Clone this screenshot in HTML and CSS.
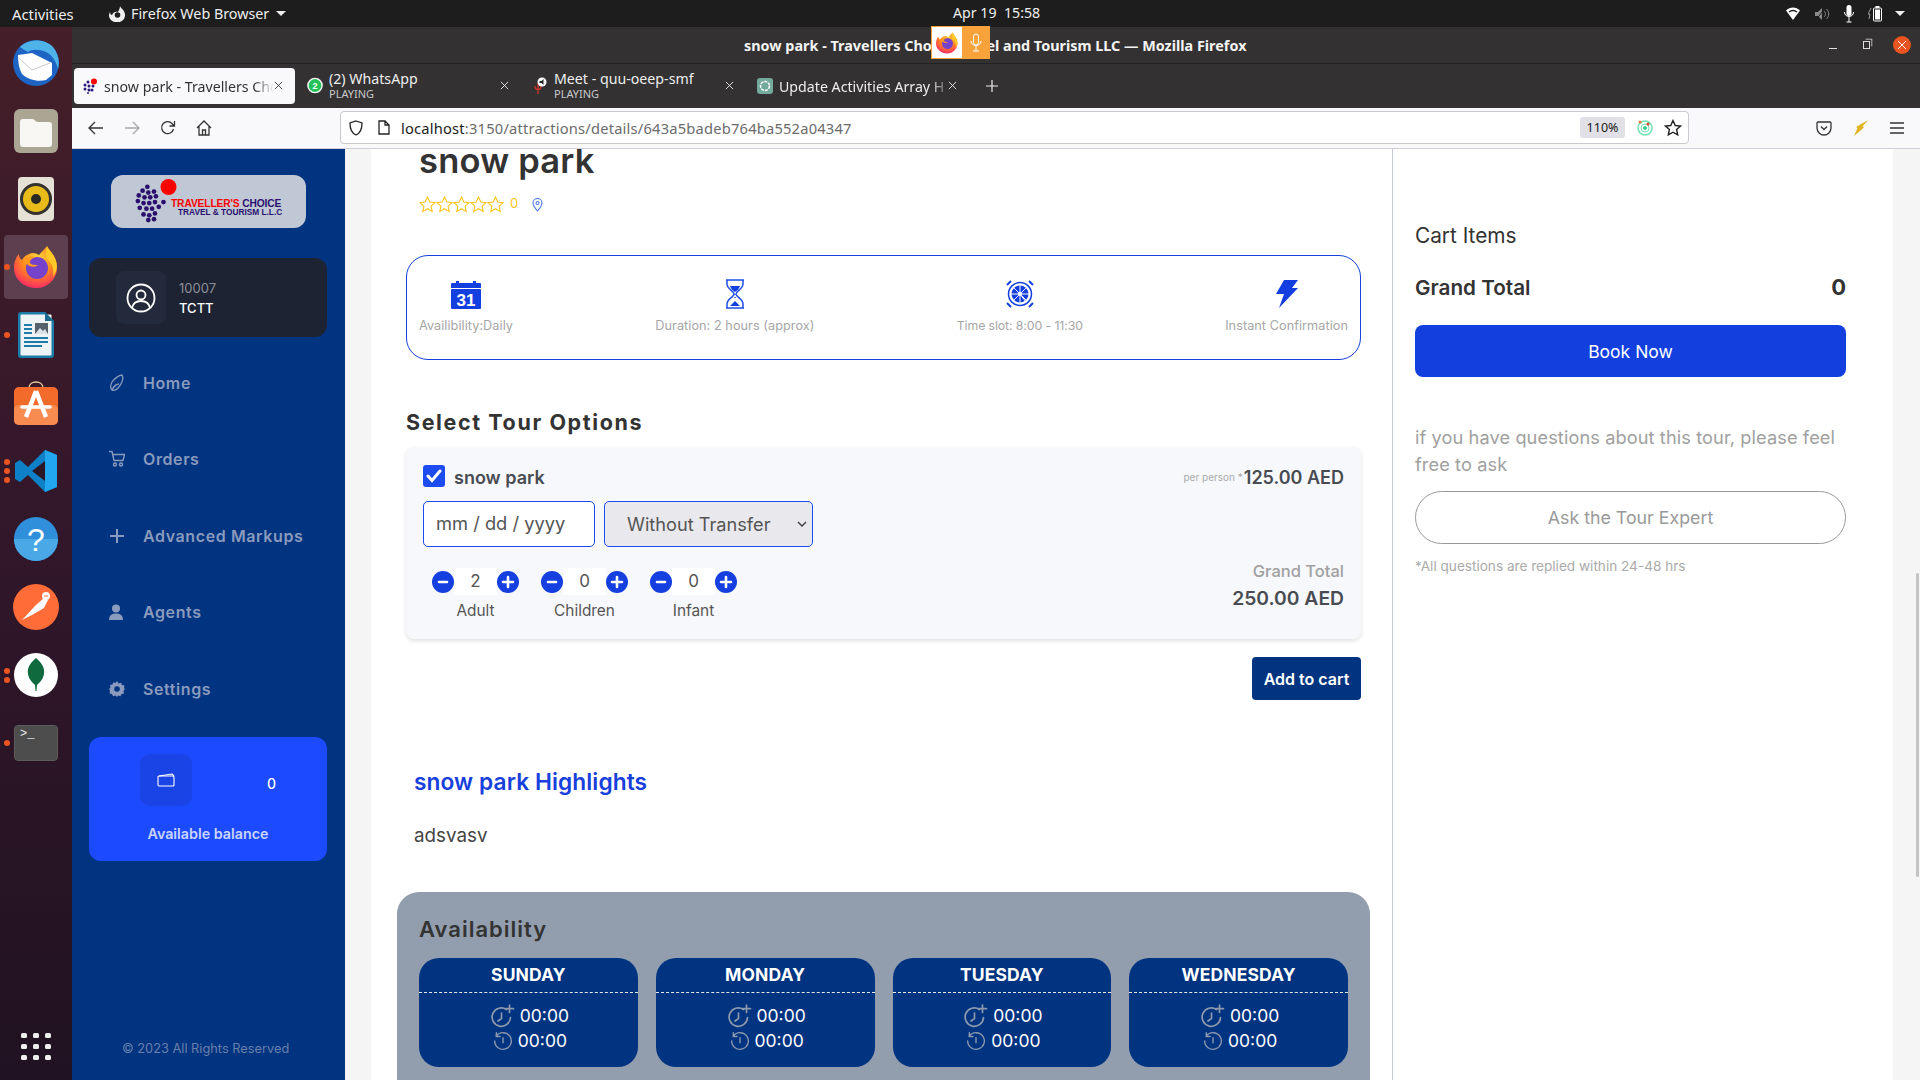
FILE: index.html
```html
<!DOCTYPE html>
<html lang="en">
<head>
<meta charset="utf-8">
<title>snow park - Travellers Choice Travel and Tourism LLC</title>
<link rel="stylesheet" href="styles.css">
</head>
<body>
<svg class="defs" width="0" height="0">
  <defs>
    <radialGradient id="ffg" cx="55%" cy="30%" r="80%"><stop offset="0" stop-color="#ffdc3c"/><stop offset=".45" stop-color="#ff8a1e"/><stop offset=".8" stop-color="#ff3d56"/><stop offset="1" stop-color="#e0207f"/></radialGradient>
    <symbol id="ff" viewBox="0 0 44 44">
      <path d="M33 1c2 5 9 9 10 20 1 12-9 22-21 22S0 34 0 23C0 17 2 12 5 9c0 3 1 5 3 6 2-4 6-6 10-7 4 0 5 1 7 2 2-3 5-5 8-9z" fill="url(#ffg)"/>
      <path d="M33 1c2 5 9 9 10 20 0 4-2 8-4 11 1-6 0-13-5-17-2-2-3-6-1-14z" fill="#ffc928"/>
      <circle cx="23" cy="23" r="11" fill="#7542c9"/>
      <path d="M8 15c4-4 10-4 14-3-4 1-6 3-6 5 0 3 5 3 8 3-3 3-9 2-11-1-2-2-4-3-5-4z" fill="#ff9a1f"/>
    </symbol>
    <symbol id="clockplus" viewBox="0 0 24 24" fill="none" stroke="#8e99ad" stroke-width="1.700" stroke-linecap="round">
      <path d="M15.500 5.500A9.200 9.200 0 1 0 19.500 13.500"/><path d="M10.500 9v5.500l-3.500 2.500"/><path d="M18.500 1v7.500M15 4.700h7.500"/>
    </symbol>
    <symbol id="clockback" viewBox="0 0 24 24" fill="none" stroke="#8e99ad" stroke-width="1.700" stroke-linecap="round">
      <path d="M4 6a10 10 0 1 1-2 6"/><path d="M4 2v4.500h4.500"/><path d="M12 8v6"/>
    </symbol>
    <symbol id="xmark" viewBox="0 0 10 10" fill="none" stroke="currentColor" stroke-width="1">
      <path d="M1 1l8 8M9 1l-8 8"/>
    </symbol>
    <symbol id="plusmark" viewBox="0 0 22 22"><circle cx="11" cy="11" r="11" fill="#163fe0"/><path d="M11 6v10M6 11h10" stroke="#fff" stroke-width="2.600" stroke-linecap="round"/></symbol>
    <symbol id="minusmark" viewBox="0 0 22 22"><circle cx="11" cy="11" r="11" fill="#163fe0"/><path d="M7 11h8" stroke="#fff" stroke-width="2.600" stroke-linecap="round"/></symbol>
  </defs>
</svg>

<header class="topbar">
  <div class="top-left">
    <span class="activities">Activities</span>
    <span class="app-menu">
      <svg width="16" height="16" viewBox="0 0 16 16"><path d="M11 0c1 3 5 4 5 9a8 7 0 1 1-15-3c0 2 1 3 2 3 1-3 4-4 6-3 1-2 2-4 2-6z" fill="#eee"/><circle cx="8.500" cy="9" r="2.800" fill="#1d1d1d"/></svg>
      Firefox Web Browser
      <i class="caret"></i>
    </span>
  </div>
  <div class="clock">Apr 19&nbsp;&nbsp;15:58</div>
  <div class="tray">
    <svg width="16" height="14" viewBox="0 0 16 14"><path d="M1 3.500C5-.5 11-.5 15 3.500L8 13z" fill="#fff"/><path d="M4 5c2.500-1.800 5.500-1.800 8 0" stroke="#1d1d1d" stroke-width="1.500" fill="none"/></svg>
    <svg width="16" height="14" viewBox="0 0 16 14"><path d="M1 5h3l4-4v12l-4-4H1z" fill="#8a8a8a"/><path d="M10 4c2 2 2 4 0 6M12.500 2c3 3 3 7 0 10" stroke="#8a8a8a" fill="none"/><path d="M2 13L11 1" stroke="#1d1d1d"/></svg>
    <svg width="12" height="18" viewBox="0 0 12 18"><rect x="3.500" y="0" width="5" height="11" rx="2.500" fill="#fff"/><path d="M1.500 7c0 6 9 6 9 0M6 12v5M3.500 17h5" stroke="#fff" fill="none"/></svg>
    <svg width="14" height="16" viewBox="0 0 14 16"><path d="M3 2L0 8h2l-1 5" stroke="#999" fill="none"/><rect x="5.500" y="2" width="8" height="13" rx="1" fill="none" stroke="#fff"/><rect x="7" y="3.500" width="5" height="10" fill="#fff"/><rect x="7.500" y="0" width="4" height="2" fill="#fff"/></svg>
    <i class="caret caret-wide"></i>
  </div>
</header>

<div class="desk">
  <nav class="dock">
    <div class="dock-item">
      <svg width="48" height="48" viewBox="0 0 48 48"><circle cx="24" cy="24" r="23" fill="#1d64c4"/><path d="M8 8c8-8 24-9 33 0 5 6 7 14 5 22-2-8-6-14-12-17-7-3-14-3-18 0-3-2-6-3-8-5z" fill="#4fb3ea"/><path d="M6 16l14-2 20 10v12l-6 5c-8 2-18 0-24-6-3-5-4-12-4-19z" fill="#fff"/><path d="M7 19l13 12 18-7" fill="none" stroke="#c9c9c9"/></svg>
    </div>
    <div class="dock-item">
      <svg width="44" height="44" viewBox="0 0 44 44"><rect width="44" height="44" rx="6" fill="#aba594"/><path d="M6 13a3 3 0 0 1 3-3h10l4 3h12a3 3 0 0 1 3 3v19a3 3 0 0 1-3 3H9a3 3 0 0 1-3-3z" fill="#f8f7f4"/></svg>
    </div>
    <div class="dock-item">
      <svg width="36" height="44" viewBox="0 0 36 44"><rect width="36" height="44" rx="4" fill="#e5e1d6"/><circle cx="18" cy="22" r="16" fill="#33322f"/><circle cx="18" cy="22" r="13" fill="#e8bb1a"/><circle cx="18" cy="22" r="5" fill="#2a2822"/></svg>
    </div>
    <div class="dock-item dock-active">
      <i class="run-dot"></i>
      <svg width="44" height="44"><use href="#ff"/></svg>
    </div>
    <div class="dock-item">
      <i class="run-dot"></i>
      <svg width="36" height="46" viewBox="0 0 36 46"><path d="M0 3a3 3 0 0 1 3-3h24l9 9v34a3 3 0 0 1-3 3H3a3 3 0 0 1-3-3z" fill="#1c7ba8"/><rect x="2.500" y="2.500" width="31" height="41" rx="1" fill="#eef3f6"/><path d="M27 0l9 9h-9z" fill="#1a6a90"/><path d="M6 13h8M6 17h8M6 21h8M6 26h24M6 30h24M6 34h18" stroke="#1c7ba8" stroke-width="2"/><rect x="17" y="11" width="13" height="11" fill="#55606a"/><path d="M17 22l5-6 3 3 2-2 3 5z" fill="#dbe3e8"/></svg>
    </div>
    <div class="dock-item">
      <svg width="44" height="44" viewBox="0 0 44 44"><path d="M15 7c0-8 14-8 14 0" fill="none" stroke="#ecc8a0" stroke-width="1.500"/><rect y="6" width="44" height="38" rx="5" fill="#f26b2b"/><rect y="24" width="44" height="20" rx="5" fill="#f78b50"/><path d="M22 10L12 36M22 10l10 26" stroke="#fff" stroke-width="4.500" fill="none"/><path d="M8 26h28" stroke="#fff" stroke-width="3.500" stroke-linecap="round"/></svg>
    </div>
    <div class="dock-item">
      <i class="run-dot"></i><i class="run-dot run-dot-b"></i><i class="run-dot run-dot-c"></i>
      <svg width="42" height="42" viewBox="0 0 42 42"><path d="M30 0l12 5v32l-12 5L13 25 5 32 0 29V13l5-3 8 7z" fill="#0d80c8"/><path d="M30 0l12 5v32l-12 5z" fill="#22a6f0"/><path d="M30 11v20L17 21z" fill="#2b1626"/></svg>
    </div>
    <div class="dock-item">
      <svg width="44" height="44" viewBox="0 0 44 44"><circle cx="22" cy="22" r="22" fill="#2f8fdb"/><path d="M0 22a22 22 0 0 0 44 0z" fill="#4aa8e6"/><text x="22" y="34" text-anchor="middle" class="help-q">?</text></svg>
    </div>
    <div class="dock-item">
      <svg width="46" height="46" viewBox="0 0 46 46"><circle cx="23" cy="23" r="23" fill="#ff6c37"/><path d="M9 36l14-15 8-7 4 2-4 8-12 7z" fill="#fff"/><circle cx="33" cy="12" r="4" fill="#fff"/><path d="M31 12l4 0" stroke="#ff6c37"/></svg>
    </div>
    <div class="dock-item">
      <i class="run-dot run-dot-d"></i><i class="run-dot run-dot-e"></i>
      <svg width="44" height="44" viewBox="0 0 44 44"><circle cx="22" cy="22" r="22" fill="#fff"/><path d="M22 5c6 5 9 10 8 16-1 6-5 9-7 11l-.500 6h-1l-.500-6c-2-2-6-5-7-11-1-6 2-11 8-16z" fill="#0f6b3e"/></svg>
    </div>
    <div class="dock-item">
      <i class="run-dot"></i>
      <div class="term-icon">&gt;_</div>
    </div>
    <div class="dock-grid">
      <i></i><i></i><i></i><i></i><i></i><i></i><i></i><i></i><i></i>
    </div>
  </nav>

  <div class="window">
    <div class="titlebar">
      <div class="win-title">snow park - Travellers Choice Travel and Tourism LLC — Mozilla Firefox</div>
      <div class="sharing">
        <span class="share-ff"><svg width="22" height="22"><use href="#ff"/></svg></span>
        <span class="share-mic"><svg width="12" height="20" viewBox="0 0 12 20"><rect x="3.500" y="1" width="5" height="11" rx="2.500" fill="none" stroke="#fff"/><path d="M1 8c0 6 10 6 10 0M6 13v5M3 18h6" fill="none" stroke="#fff"/></svg></span>
      </div>
      <div class="win-ctl">
        <i class="win-min"></i>
        <i class="win-max"></i>
        <span class="win-close"><svg width="10" height="10"><use href="#xmark"/></svg></span>
      </div>
    </div>

    <div class="tabbar">
      <div class="tab tab-active">
        <svg class="fav" width="16" height="16" viewBox="0 0 16 16" fill="#2a1a78"><circle cx="6" cy="4" r="1.500"/><circle cx="3" cy="7" r="1.500"/><circle cx="7" cy="8" r="1.500"/><circle cx="11" cy="8" r="1.500"/><circle cx="3" cy="11" r="1.500"/><circle cx="7" cy="12" r="1.500"/><circle cx="10" cy="12" r="1.500"/><circle cx="6" cy="15" r="1"/><circle cx="12" cy="3.500" r="3" fill="#f00"/></svg>
        <span class="tab-label tab-fade">snow park - Travellers Cho</span>
        <svg class="tab-x" width="9" height="9"><use href="#xmark"/></svg>
      </div>
      <div class="tab tab-wa">
        <svg class="fav" width="16" height="18" viewBox="0 0 16 18"><circle cx="8" cy="8.500" r="7.800" fill="#fff"/><circle cx="8" cy="8.500" r="6.400" fill="#25c25a"/><text x="8" y="12" text-anchor="middle" class="fav-num">2</text></svg>
        <div class="tab-two"><span>(2) WhatsApp</span><small>PLAYING</small></div>
        <svg class="tab-x" width="9" height="9"><use href="#xmark"/></svg>
      </div>
      <div class="tab tab-meet">
        <svg class="fav" width="16" height="18" viewBox="0 0 16 18"><path d="M6 6v6M3 9c0 5 6 5 6 0M6 14v3" stroke="#c9352b" fill="none" stroke-width="1.400"/><circle cx="10" cy="5" r="4.500" fill="#fff"/><path d="M7.500 4h2l2-2v6l-2-2h-2z" fill="#222"/></svg>
        <div class="tab-two"><span>Meet - quu-oeep-smf</span><small>PLAYING</small></div>
        <svg class="tab-x" width="9" height="9"><use href="#xmark"/></svg>
      </div>
      <div class="tab tab-gpt">
        <svg class="fav" width="16" height="16" viewBox="0 0 16 16"><rect width="16" height="16" rx="3" fill="#74aa9c"/><circle cx="8" cy="8" r="4.500" fill="none" stroke="#fff" stroke-width="1.500" stroke-dasharray="3 1"/></svg>
        <span class="tab-label tab-fade">Update Activities Array H</span>
        <svg class="tab-x" width="9" height="9"><use href="#xmark"/></svg>
      </div>
      <svg class="tab-new" width="12" height="12" viewBox="0 0 12 12"><path d="M6 0v12M0 6h12" stroke="#eee" stroke-width="1.200"/></svg>
    </div>

    <div class="navbar">
      <div class="nav-btns">
        <svg width="16" height="14" viewBox="0 0 16 14" fill="none" stroke="#333" stroke-width="1.300"><path d="M15 7H1M7 1L1 7l6 6"/></svg>
        <svg width="16" height="14" viewBox="0 0 16 14" fill="none" stroke="#a8a8a8" stroke-width="1.300"><path d="M1 7h14M9 1l6 6-6 6"/></svg>
        <svg width="16" height="16" viewBox="0 0 16 16" fill="none" stroke="#333" stroke-width="1.300"><path d="M13.500 9A6 6 0 1 1 12 3.500L14 6M14.500 1v5h-5"/></svg>
        <svg width="16" height="16" viewBox="0 0 16 16" fill="none" stroke="#333" stroke-width="1.300"><path d="M1 8l7-7 7 7M3 6.500V15h10V6.500M6.500 15v-5h3v5"/></svg>
      </div>
      <div class="urlbar">
        <svg width="14" height="16" viewBox="0 0 14 16" fill="none" stroke="#222" stroke-width="1.300"><path d="M7 1l6 2c0 6-1 10-6 12C2 13 1 9 1 3z"/></svg>
        <svg width="12" height="15" viewBox="0 0 12 15" fill="none" stroke="#222" stroke-width="1.300"><path d="M1 1h6l4 4v9H1zM7 1v4h4"/></svg>
        <span class="url-text"><b>localhost</b>:3150/attractions/details/643a5badeb764ba552a04347</span>
        <span class="zoom-badge">110%</span>
        <svg width="16" height="18" viewBox="0 0 16 18"><circle cx="8" cy="9" r="7" fill="none" stroke="#6fe0b0" stroke-width="1.500"/><circle cx="8" cy="9" r="4" fill="none" stroke="#6fe0b0"/><circle cx="8" cy="9" r="2" fill="#3ecb8b"/><circle cx="3" cy="3" r="1.500" fill="#e8764a"/><circle cx="11" cy="5" r="1.500" fill="#e0402a"/></svg>
        <svg width="18" height="18" viewBox="0 0 18 18" fill="none" stroke="#222" stroke-width="1.400"><path d="M9 1.500l2.300 5 5.200.600-3.900 3.500 1.100 5.300L9 13.200l-4.700 2.700 1.100-5.300L1.500 7.100l5.200-.600z"/></svg>
      </div>
      <div class="nav-end">
        <svg width="16" height="16" viewBox="0 0 16 16" fill="none" stroke="#333" stroke-width="1.300"><path d="M2 2h12a1 1 0 0 1 1 1v5a7 7 0 0 1-14 0V3a1 1 0 0 1 1-1z"/><path d="M5 6.500l3 3 3-3"/></svg>
        <svg width="14" height="16" viewBox="0 0 14 16"><path d="M14 0L8.500 6.500l1.500 1L0 16 3.500 8 2 7z" fill="#e0b420"/></svg>
        <svg width="14" height="12" viewBox="0 0 14 12" stroke="#333" stroke-width="1.300"><path d="M0 1h14M0 6h14M0 11h14"/></svg>
      </div>
    </div>

    <div class="page">
      <aside class="sidebar">
        <div class="logo">
          <svg class="logo-dots" width="44" height="46" viewBox="0 0 44 46">
            <g fill="#2a0f6e" transform="translate(0 5) scale(.95)">
              <circle cx="13" cy="3" r="2.500"/><circle cx="8" cy="7" r="2.500"/><circle cx="14" cy="9" r="2.500"/><circle cx="20" cy="8" r="2.500"/><circle cx="4" cy="12" r="2.500"/><circle cx="10" cy="14" r="2.500"/><circle cx="16" cy="14" r="2.500"/><circle cx="22" cy="13" r="2.500"/><circle cx="3" cy="18" r="2.500"/><circle cx="9" cy="20" r="2.500"/><circle cx="15" cy="20" r="2.500"/><circle cx="21" cy="19" r="2.500"/><circle cx="30" cy="19" r="2.500"/><circle cx="5" cy="25" r="2.500"/><circle cx="12" cy="26" r="2.500"/><circle cx="18" cy="26" r="2.500"/><circle cx="25" cy="24" r="2.500"/><circle cx="9" cy="32" r="2.500"/><circle cx="15" cy="33" r="2.500"/><circle cx="21" cy="31" r="2.500"/><circle cx="14" cy="38" r="2.500"/><circle cx="20" cy="37" r="2.500"/>
            </g>
            <circle cx="33.500" cy="8" r="8" fill="#f00"/>
          </svg>
          <div class="logo-text">
            <div class="logo-l1"><span>TRAVELLER'S</span> CHOICE</div>
            <div class="logo-l2">TRAVEL &amp; TOURISM L.L.C</div>
          </div>
        </div>

        <div class="user-card">
          <div class="avatar">
            <svg width="30" height="30" viewBox="0 0 30 30" fill="none" stroke="#fff" stroke-width="1.800"><circle cx="15" cy="15" r="13.500"/><circle cx="15" cy="12" r="4.500"/><path d="M6 25c1-5 5-7 9-7s8 2 9 7"/></svg>
          </div>
          <div class="user-info">
            <div class="user-id">10007</div>
            <div class="user-name">TCTT</div>
          </div>
        </div>

        <ul class="menu">
          <li class="menu-item">
            <svg width="16" height="18" viewBox="0 0 16 18" fill="none" stroke="#8a9bbd" stroke-width="1.300"><path d="M13 1c2 3 0 9-4 13-2 2-5 3-6 2s-2-4 0-8c2-3 7-7 10-7z"/><path d="M3 16c2-4 5-6 7-6"/></svg>
            <span>Home</span>
          </li>
          <li class="menu-item">
            <svg width="16" height="17" viewBox="0 0 16 17" fill="none" stroke="#8a9bbd" stroke-width="1.400"><path d="M0 1h3l2 9h9l1.500-6H4"/><circle cx="6" cy="14" r="1.500"/><circle cx="12" cy="14" r="1.500"/></svg>
            <span>Orders</span>
          </li>
          <li class="menu-item">
            <svg width="16" height="16" viewBox="0 0 16 16" stroke="#8a9bbd" stroke-width="2"><path d="M8 1v14M1 8h14"/></svg>
            <span>Advanced Markups</span>
          </li>
          <li class="menu-item">
            <svg width="14" height="16" viewBox="0 0 14 16" fill="#8a9bbd"><circle cx="7" cy="4.500" r="4"/><path d="M0 16c0-5 3-6.500 7-6.500s7 1.500 7 6.500z"/></svg>
            <span>Agents</span>
          </li>
          <li class="menu-item">
            <svg width="16" height="16" viewBox="0 0 16 16"><path d="M8 0l1.500 2.500 2.500-.800 1 2.300 2.500.500-.500 2.800L16 8l-1.500 1.700.500 2.800-2.500.500-1 2.300-2.500-.800L8 16l-1.500-1.500-2.500.800-1-2.300-2.500-.500.500-2.800L0 8l1.500-1.200L1 4l2.500-.500 1-2.300 2 .800z" fill="#8a9bbd"/><circle cx="8" cy="8" r="2.800" fill="#003380"/></svg>
            <span>Settings</span>
          </li>
        </ul>

        <div class="balance">
          <div class="balance-top">
            <div class="wallet">
              <svg width="18" height="14" viewBox="0 0 18 14" fill="none" stroke="#fff" stroke-width="1.100"><rect x="1" y="3" width="16" height="10" rx="1"/><path d="M2 3l13-2 2 2"/></svg>
            </div>
            <span class="balance-num">0</span>
          </div>
          <div class="balance-label">Available balance</div>
        </div>

        <div class="copyright">© 2023 All Rights Reserved</div>
      </aside>

      <div class="gutter"></div>

      <main class="main">
        <h1 class="title">snow park</h1>
        <div class="rating">
          <svg class="stars" width="85" height="17" viewBox="0 0 85 17" fill="none" stroke="#fcc419" stroke-width="1.100">
            <path id="st" d="M8.500 1l2.300 5 5.200.600-3.900 3.500 1.100 5.400-4.700-2.800-4.700 2.800 1.100-5.400L1 6.600l5.200-.600z"/>
            <use href="#st" x="17"/><use href="#st" x="34"/><use href="#st" x="51"/><use href="#st" x="68"/>
          </svg>
          <span class="rating-num">0</span>
          <svg class="pin" width="11" height="14" viewBox="0 0 11 14" fill="none" stroke="#4a78e0" stroke-width="1.100"><path d="M5.500 13C2 9 1 7 1 5a4.500 4.500 0 0 1 9 0c0 2-1 4-4.500 8z"/><circle cx="5.500" cy="5" r="1.500"/></svg>
        </div>

        <section class="info-box">
          <div class="info-item">
            <svg width="30" height="30" viewBox="0 0 30 30"><path d="M0 5a1 1 0 0 1 1-1h4V2h3v2h14V2h3v2h4a1 1 0 0 1 1 1v4H0z" fill="#143fe0"/><rect y="10" width="30" height="20" rx="1" fill="#143fe0"/><text x="15" y="26.500" text-anchor="middle" class="cal-num">31</text></svg>
            <span>Availibility:Daily</span>
          </div>
          <div class="info-item">
            <svg width="20" height="30" viewBox="0 0 20 30" fill="none" stroke="#1f4fe8" stroke-width="1.500"><path d="M1 1h18M1 29h18M2 1v4c0 5 7 7 7 10s-7 5-7 10v4M18 1v4c0 5-7 7-7 10s7 5 7 10v4"/><path d="M5 7h10c-1 3-3 5-5 6-2-1-4-3-5-6zM5 27h10l-5-5z" fill="#143fe0" stroke="none"/><path d="M10 15v6" stroke-dasharray="1 2"/></svg>
            <span>Duration: 2 hours (approx)</span>
          </div>
          <div class="info-item">
            <svg width="32" height="30" viewBox="0 0 32 30"><circle cx="16" cy="15" r="11.500" fill="none" stroke="#143fe0" stroke-width="1.500"/><circle cx="16" cy="15" r="8.500" fill="#143fe0"/><path d="M16 6v18M7 15h18M16 15l6 8M10 9l12 12M22 9L10 21" stroke="#fff" stroke-width="1"/><circle cx="16" cy="15" r="2" fill="#fff"/><path d="M3 6l4-4M29 6l-4-4M3 24l4 4M29 24l-4 4" stroke="#143fe0" stroke-width="2"/></svg>
            <span class="slot-text">Time slot: 8:00 - 11:30</span>
          </div>
          <div class="info-item">
            <svg width="22" height="28" viewBox="0 0 22 28"><path d="M8 0h14l-6 8h6L3 28l5-14H0z" fill="#143fe0"/></svg>
            <span>Instant Confirmation</span>
          </div>
        </section>

        <h2 class="options-title">Select Tour Options</h2>

        <section class="option-card">
          <div class="option-head">
            <div class="check"><svg width="16" height="14" viewBox="0 0 16 14" fill="none" stroke="#fff" stroke-width="3" stroke-linecap="round"><path d="M2 7l4 4.500L14 2"/></svg></div>
            <span class="option-name">snow park</span>
            <span class="per-person">per person *</span>
            <span class="option-price">125.00 AED</span>
          </div>
          <div class="option-fields">
            <div class="date-field">mm / dd / yyyy</div>
            <div class="select-field">
              <span>Without Transfer</span>
              <svg width="10" height="6" viewBox="0 0 10 6" fill="none" stroke="#444" stroke-width="1.500"><path d="M1 1l4 4 4-4"/></svg>
            </div>
          </div>
          <div class="option-bottom">
            <div class="steppers">
              <div class="stepper">
                <div class="stepper-row"><svg width="22" height="22"><use href="#minusmark"/></svg><span class="count">2</span><svg width="22" height="22"><use href="#plusmark"/></svg></div>
                <div class="stepper-label">Adult</div>
              </div>
              <div class="stepper">
                <div class="stepper-row"><svg width="22" height="22"><use href="#minusmark"/></svg><span class="count">0</span><svg width="22" height="22"><use href="#plusmark"/></svg></div>
                <div class="stepper-label">Children</div>
              </div>
              <div class="stepper">
                <div class="stepper-row"><svg width="22" height="22"><use href="#minusmark"/></svg><span class="count">0</span><svg width="22" height="22"><use href="#plusmark"/></svg></div>
                <div class="stepper-label">Infant</div>
              </div>
            </div>
            <div class="option-total">
              <div class="total-label">Grand Total</div>
              <div class="total-value">250.00 AED</div>
            </div>
          </div>
        </section>

        <div class="cart-row"><button class="add-cart">Add to cart</button></div>

        <h2 class="highlights">snow park Highlights</h2>
        <p class="high-text">adsvasv</p>

        <section class="availability">
          <h2 class="avail-title">Availability</h2>
          <div class="days">
            <div class="day">
              <div class="day-name">SUNDAY</div>
              <div class="day-times">
                <div class="time"><svg width="24" height="24"><use href="#clockplus"/></svg>00:00</div>
                <div class="time"><svg width="20" height="20"><use href="#clockback"/></svg>00:00</div>
              </div>
            </div>
            <div class="day">
              <div class="day-name">MONDAY</div>
              <div class="day-times">
                <div class="time"><svg width="24" height="24"><use href="#clockplus"/></svg>00:00</div>
                <div class="time"><svg width="20" height="20"><use href="#clockback"/></svg>00:00</div>
              </div>
            </div>
            <div class="day">
              <div class="day-name">TUESDAY</div>
              <div class="day-times">
                <div class="time"><svg width="24" height="24"><use href="#clockplus"/></svg>00:00</div>
                <div class="time"><svg width="20" height="20"><use href="#clockback"/></svg>00:00</div>
              </div>
            </div>
            <div class="day">
              <div class="day-name">WEDNESDAY</div>
              <div class="day-times">
                <div class="time"><svg width="24" height="24"><use href="#clockplus"/></svg>00:00</div>
                <div class="time"><svg width="20" height="20"><use href="#clockback"/></svg>00:00</div>
              </div>
            </div>
          </div>
        </section>
      </main>

      <aside class="aside">
        <div class="cart-title">Cart Items</div>
        <div class="cart-total"><span>Grand Total</span><span class="cart-zero">0</span></div>
        <button class="book">Book Now</button>
        <p class="ask-text">if you have questions about this tour, please feel free to ask</p>
        <button class="ask">Ask the Tour Expert</button>
        <p class="ask-note">*All questions are replied within 24-48 hrs</p>
      </aside>

      <div class="gutter-right"><i class="thumb"></i></div>
    </div>
  </div>
</div>
</body>
</html>
```

FILE: styles.css
```css
* { box-sizing: border-box; }
html, body { margin: 0; padding: 0; width: 1920px; height: 1080px; overflow: hidden; }
body { font-family: "Inter", "Liberation Sans", sans-serif; background: #fff; color: #333; }
h1, h2, p, ul { margin: 0; padding: 0; }
ul { list-style: none; }
i { display: block; }
.defs { position: absolute; }

/* GNOME top bar */
.topbar { height: 27px; background: #1d1d1d; color: #eee; display: flex; align-items: center; font: 14px "Noto Sans", sans-serif; position: relative; }
.top-left { display: flex; align-items: center; padding-left: 12px; }
.activities { width: 97px; font-size: 14.800px; }
.app-menu { display: flex; align-items: center; gap: 6px; font-size: 14.300px; }
.caret { width: 0; height: 0; border-left: 5px solid transparent; border-right: 5px solid transparent; border-top: 5px solid #eee; margin-left: 1px; }
.caret-wide { margin-left: 0; }
.clock { position: absolute; left: 953px; top: 4px; line-height: 18px; font-size: 14.200px; }
.tray { margin-left: auto; display: flex; align-items: center; gap: 13px; padding-right: 15px; }

.desk { display: flex; height: 1053px; }

/* Dock */
.dock { width: 72px; flex: none; background: linear-gradient(180deg, #451f29 0%, #33172a 45%, #201222 100%); display: flex; flex-direction: column; padding-top: 2px; }
.dock-item { height: 68px; flex: none; display: flex; align-items: center; justify-content: center; position: relative; }
.dock-active::before { content: ""; position: absolute; left: 4px; top: 2px; width: 64px; height: 64px; border-radius: 4px; background: #5d404f; }
.dock-active svg { position: relative; }
.run-dot { position: absolute; left: 4px; top: 31px; width: 6px; height: 6px; border-radius: 50%; background: #e95420; }
.run-dot-b { top: 22px; }
.run-dot-c { top: 40px; }
.run-dot-d { top: 27px; }
.run-dot-e { top: 36px; }
.help-q { font: 400 32px "Liberation Sans", sans-serif; fill: #fff; }
.term-icon { width: 44px; height: 36px; background: #4d4d4d; border-radius: 4px; border: 1px solid #5c5c5c; color: #eee; font: 12px/14px "Liberation Mono", monospace; padding: 1px 0 0 5px; }
.dock-grid { margin-top: auto; margin-bottom: 20px; margin-left: 21px; width: 30px; display: grid; grid-template-columns: repeat(3, 6px); justify-content: space-between; row-gap: 6px; }
.dock-grid i { width: 6px; height: 5px; background: #eee; border-radius: 1.500px; }

/* Browser chrome */
.window { flex: 1; display: flex; flex-direction: column; min-width: 0; }
.titlebar { height: 37px; background: #333132; border-bottom: 1px solid #232222; position: relative; display: flex; align-items: center; }
.win-title { position: absolute; left: 672px; top: 9px; color: #f4f4f4; font: 700 14.400px/19px "Noto Sans", sans-serif; white-space: nowrap; }
.sharing { position: absolute; left: 860px; top: 0; height: 31px; display: flex; outline: 1px solid #f8a23b; z-index: 2; }
.share-ff { width: 30px; background: #fff; display: flex; align-items: center; justify-content: center; }
.share-mic { width: 27px; background: #f8a23b; display: flex; align-items: center; justify-content: center; }
.win-ctl { margin-left: auto; display: flex; align-items: center; }
.win-min { width: 8px; height: 1.500px; background: #ddd; margin: 7px 26px 0 0; }
.win-max { width: 7px; height: 8px; border: 1.200px solid #ddd; margin-right: 23px; box-shadow: 1.500px -1.500px 0 -.200px #333132, 2.500px -2.500px 0 -.200px #bbb; }
.win-close { width: 18px; height: 18px; border-radius: 50%; background: #e95420; color: #fff; display: flex; align-items: center; justify-content: center; margin-right: 9px; }

.tabbar { height: 44px; background: #333132; display: flex; align-items: center; padding-left: 2px; color: #eee; font: 14.200px "Noto Sans", sans-serif; flex: none; }
.tab { height: 36px; display: flex; align-items: center; position: relative; flex: none; }
.tab-active { width: 221px; background: #f9f9fb; border-radius: 4px; color: #333; padding-left: 8px; }
.tab-wa { width: 229px; padding-left: 12px; }
.tab-meet { width: 225px; padding-left: 8px; }
.tab-gpt { width: 226px; padding-left: 8px; }
.fav { flex: none; margin-right: 6px; }
.fav-num { font: 700 9px "Liberation Sans", sans-serif; fill: #fff; }
.tab-label { white-space: nowrap; overflow: hidden; display: block; }
.tab-fade { -webkit-mask-image: linear-gradient(90deg, #000 88%, transparent 100%); mask-image: linear-gradient(90deg, #000 88%, transparent 100%); }
.tab-active .tab-label { width: 170px; }
.tab-gpt .tab-label { width: 172px; }
.tab-two { display: flex; flex-direction: column; line-height: 16px; margin-top: 0; white-space: nowrap; }
.tab-two small { font-size: 11px; line-height: 14px; color: #c9c9c9; }
.tab-x { position: absolute; left: 200px; top: 13px; color: #eee; }
.tab-active .tab-x { color: #333; }
.tab-wa .tab-x { left: 205px; }
.tab-meet .tab-x { left: 201px; }
.tab-gpt .tab-x { left: 199px; }
.tab-new { margin-left: 11px; flex: none; position: relative; }

.navbar { height: 41px; background: #f9f9fb; border-bottom: 1px solid #cfcfd8; display: flex; align-items: center; flex: none; padding-bottom: 1px; position: relative; z-index: 3; }
.nav-btns { display: flex; align-items: center; gap: 20px; padding-left: 16px; width: 268px; }
.urlbar { width: 1349px; height: 33px; background: #fff; border: 1px solid #c9c9cf; border-radius: 4px; display: flex; align-items: center; padding-left: 8px; padding-right: 6px; }
.urlbar > svg:nth-child(2) { margin-left: 15px; }
.url-text { margin-left: 11px; font: 14.700px "Noto Sans", sans-serif; color: #6b6b6b; white-space: nowrap; letter-spacing: .2px; }
.url-text b { font-weight: 400; color: #1a1a1a; }
.zoom-badge { margin-left: auto; width: 45px; height: 21px; background: #e0e0e6; border-radius: 3px; font: 12.500px/21px "Noto Sans", sans-serif; color: #222; text-align: center; }
.urlbar > svg:nth-of-type(3) { margin-left: 12px; }
.urlbar > svg:nth-of-type(4) { margin-left: 11px; }
.nav-end { display: flex; align-items: center; margin-left: 127px; gap: 22px; }

/* Page */
.page { flex: 1; display: flex; overflow: hidden; min-height: 0; }
.sidebar { width: 273px; flex: none; background: #003380; padding: 26px 18px 23px 17px; display: flex; flex-direction: column; }
.logo { width: 195px; height: 53px; margin-left: 22px; background: #bfc8d4; border-radius: 12px; display: flex; align-items: center; padding-left: 24px; position: relative; }
.logo-dots { flex: none; margin-top: 1px; }
.logo-text { margin-left: -8px; margin-top: 13px; white-space: nowrap; }
.logo-l1 { font: 800 10.200px/9px "Liberation Sans", sans-serif; color: #2a0f6e; letter-spacing: -.1px; }
.logo-l1 span { color: #f00; }
.logo-l2 { font: 700 8.300px/9px "Liberation Sans", sans-serif; color: #2a0f6e; margin-left: 7px; }

.user-card { height: 79px; margin-top: 30px; background: #1d2333; border-radius: 12px; display: flex; align-items: center; padding-left: 27px; }
.avatar { width: 50px; height: 53px; background: #232a3b; border-radius: 8px; display: flex; align-items: center; justify-content: center; }
.user-info { margin-left: 13px; }
.user-id { font-size: 13px; line-height: 20px; color: #8b8f99; }
.user-name { font-size: 13px; line-height: 20px; color: #fff; font-weight: 500; }

.menu { margin-top: 7.500px; }
.menu-item { height: 76.500px; display: flex; align-items: center; position: relative; padding-left: 54px; color: #8a9bbd; font-size: 16px; font-weight: 600; letter-spacing: .6px; }
.menu-item svg { position: absolute; left: 20px; top: 50%; transform: translateY(-50%); }

.balance { height: 124px; margin-top: 10px; background: #1c4bff; border-radius: 12px; padding: 17px 0 0 51px; }
.balance-top { display: flex; align-items: center; }
.wallet { width: 52px; height: 52px; background: #1b44e6; border-radius: 10px; display: flex; align-items: center; justify-content: center; }
.balance-num { margin-left: 75px; margin-top: 7px; color: #fff; font-weight: 500; font-size: 14px; }
.balance-label { margin: 16px 0 0 -51px; text-align: center; color: #c8d3ff; font-size: 14.300px; font-weight: 600; line-height: 24px; }
.copyright { margin-top: auto; margin-left: 33px; color: #6a80ab; font-size: 12.800px; line-height: 16px; white-space: nowrap; }

.gutter { width: 26px; flex: none; background: #f5f5f5; }
.main { width: 1021px; flex: none; background: #fff; padding: 0 31px 0 35px; overflow: hidden; }
.title { font-size: 34.500px; font-weight: 600; line-height: 24px; margin-left: 13px; color: #333; letter-spacing: .2px; }
.rating { display: flex; align-items: center; margin: 23px 0 0 13px; height: 17px; }
.rating-num { color: #fcc419; font-size: 13px; margin-left: 6px; margin-top: -4px; }
.pin { margin-left: 14px; }

.info-box { margin-top: 42px; height: 105px; border: 1.500px solid #1740dd; border-radius: 22px; display: flex; justify-content: space-between; padding: 23px 12px 0; }
.info-item { display: flex; flex-direction: column; align-items: center; }
.info-item svg { height: 30px; flex: none; }
.info-item span { margin-top: 9px; font-size: 12.700px; line-height: 16px; color: #a6a6a6; white-space: nowrap; letter-spacing: .05px; }
.info-item .slot-text { font-size: 12.300px; letter-spacing: -.1px; }
.cal-num { font: 700 17px "Liberation Sans", sans-serif; fill: #fff; }

.options-title { margin-top: 48px; font-size: 21.500px; font-weight: 700; line-height: 28px; letter-spacing: 1.600px; color: #333; }
.option-card { margin-top: 11px; height: 192px; background: #f7f8fc; border-radius: 8px; box-shadow: 0 2px 4px rgba(0,0,0,.12); padding: 18px 17px 0; }
.option-head { display: flex; align-items: center; height: 22px; }
.check { width: 22px; height: 22px; background: #1c4bf0; border-radius: 3px; display: flex; align-items: center; justify-content: center; }
.option-name { margin-left: 9px; margin-top: 2px; font-size: 18px; font-weight: 600; color: #484c52; }
.per-person { margin-left: auto; margin-top: 2px; font-size: 10px; color: #aaa; }
.option-price { margin-left: 1px; margin-top: 2px; font-size: 18px; font-weight: 600; color: #484c52; }
.option-fields { display: flex; gap: 9px; margin-top: 14px; }
.date-field { width: 172px; height: 46px; background: #fff; border: 1.500px solid #1c4bf0; border-radius: 5px; font-size: 18.300px; line-height: 43px; padding-left: 12px; color: #555; }
.select-field { width: 209px; height: 46px; background: #e9e9ed; border: 1.500px solid #1c4bf0; border-radius: 5px; font-size: 18.200px; display: flex; align-items: center; justify-content: space-between; padding: 0 5px 0 22px; color: #555; }
.option-bottom { display: flex; justify-content: space-between; margin-top: 15px; }
.steppers { display: flex; gap: 22px; padding: 6px 0 0 9px; }
.stepper { width: 87px; }
.stepper-row { display: flex; align-items: center; height: 27px; }
.stepper:nth-child(n+2) .count { width: 44px; }
.count { width: 43px; height: 27px; background: #fff; text-align: center; font-size: 17px; line-height: 27px; color: #555; }
.stepper-row svg { flex: none; }
.stepper-label { margin-top: 6px; text-align: center; font-size: 15.400px; line-height: 20px; color: #555; white-space: nowrap; }
.option-total { text-align: right; }
.total-label { font-size: 16.500px; line-height: 18px; font-weight: 500; color: #a0a0a0; margin-top: 0; }
.total-value { margin-top: 6px; font-size: 19.300px; line-height: 24px; font-weight: 600; color: #484c52; }
.cart-row { display: flex; justify-content: flex-end; margin-top: 18px; }
.add-cart { width: 109px; height: 43px; background: #003380; color: #fff; border: 0; border-radius: 4px; font: 600 16px "Inter", sans-serif; padding: 0; }

.highlights { margin: 67px 0 0 8px; font-size: 22.700px; line-height: 30px; font-weight: 600; color: #1740dd; letter-spacing: .1px; }
.high-text { margin: 27px 0 0 8px; font-size: 18.800px; line-height: 24px; color: #444; }
.availability { margin: 44px -9px 0; background: #929eae; border-radius: 22px 22px 0 0; padding: 22px 22px 0; height: 260px; }
.avail-title { font-size: 22px; line-height: 30px; font-weight: 600; color: #333; letter-spacing: 1px; }
.days { display: grid; grid-template-columns: repeat(4, 1fr); gap: 18px; margin-top: 14px; }
.day { height: 109px; background: #003380; border-radius: 20px; color: #fff; text-align: center; }
.day-name { height: 35px; border-bottom: 1px dashed #e8e8e8; font-size: 17.500px; font-weight: 700; line-height: 34px; letter-spacing: .1px; }
.day-times { padding-top: 10px; }
.time { height: 25px; display: flex; align-items: center; justify-content: center; gap: 5px; font-size: 17.500px; padding-left: 3px; }

.aside { width: 501px; flex: none; background: #fff; border-left: 1px solid #c3ccd6; padding: 72px 47px 0 22px; }
.cart-title { font-size: 20.800px; line-height: 30px; color: #333; }
.cart-total { display: flex; justify-content: space-between; margin-top: 22px; font-size: 20.700px; font-weight: 600; line-height: 30px; color: #333; }
.cart-zero { font-size: 22px; font-weight: 700; margin-top: -1px; }
.book { display: block; width: 100%; height: 52px; margin-top: 22px; background: #133fdf; color: #fff; border: 0; border-radius: 8px; font: 400 17.500px "Inter", sans-serif; }
.ask-text { margin-top: 46.500px; font-size: 18.200px; line-height: 27px; color: #a0a0a0; letter-spacing: .1px; }
.ask { display: block; width: 100%; height: 53px; margin-top: 13.500px; background: #fff; color: #999; border: 1px solid #999; border-radius: 27px; font: 400 17.800px "Inter", sans-serif; }
.ask-note { margin-top: 13px; font-size: 13.600px; line-height: 18px; color: #aaa; }
.gutter-right { flex: 1; background: #f5f5f5; position: relative; }
.thumb { position: absolute; right: 1px; top: 424px; width: 3px; height: 304px; background: #c4c4c4; border-radius: 2px; }
```
